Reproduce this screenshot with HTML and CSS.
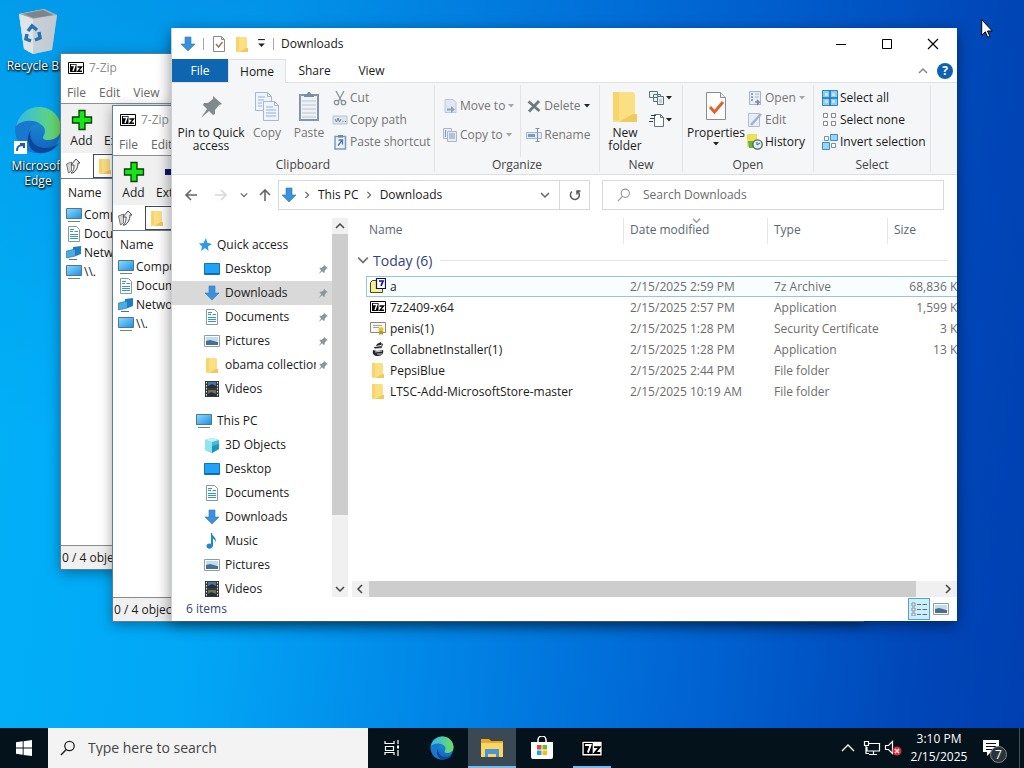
FILE: index.html
```html
<!DOCTYPE html>
<html lang="en">
<head>
    <meta charset="UTF-8">
    <meta name="viewport" content="width=device-width, initial-scale=1.0">
    <title>Desktop</title>
    <link rel="stylesheet" href="styles.css">
</head>
<body>
    <!-- Icon sprite -->
    <svg class="sprite" aria-hidden="true">
        <defs>
            <linearGradient id="edge-a" x1="0" y1="0" x2="1" y2="0"><stop offset="0" stop-color="#2fb9ee"/><stop offset="1" stop-color="#6fdc5c"/></linearGradient>
            <linearGradient id="edge-b" x1="0" y1="0" x2="0" y2="1"><stop offset="0" stop-color="#1b9de2"/><stop offset="1" stop-color="#1560bb"/></linearGradient>
            <linearGradient id="screen" x1="0" y1="0" x2="1" y2="1"><stop offset="0" stop-color="#8fdcff"/><stop offset="1" stop-color="#1b8fe0"/></linearGradient>
            <linearGradient id="bin" x1="0" y1="0" x2="1" y2="0"><stop offset="0" stop-color="#dfe5ea"/><stop offset="1" stop-color="#b3bcc6"/></linearGradient>
        </defs>
        <symbol id="i-down" viewBox="0 0 16 16"><path d="M5 1h6v7h4l-7 7-7-7h4z" fill="#3a92dc" stroke="#2a78bd" stroke-width=".6"/></symbol>
        <symbol id="i-folder" viewBox="0 0 16 16"><path d="M2 1h10l1 1v11l1 1v2H2z" fill="#fbdf83"/><path d="M2 1h3v14H2z" fill="#f7d56c"/><path d="M12 12h2v4H5z" fill="#f0ca5e"/></symbol>
        <symbol id="i-check" viewBox="0 0 16 16"><path d="M2.500 .5h8l3 3v12h-11z" fill="#fff" stroke="#8b8b8b"/><path d="M10.500.5v3h3" fill="none" stroke="#8b8b8b"/><path d="M5 8l2.500 3L11.500 6" fill="none" stroke="#a5744e" stroke-width="1.500"/></symbol>
        <symbol id="i-caret" viewBox="0 0 6 4"><path d="M0 0h6L3 3.500z" fill="currentColor"/></symbol>
        <symbol id="i-pin" viewBox="0 0 32 32"><path d="M18 6l9 8-3 1-4 5 0 4-2 1-4-4-8 7 6-9-4-4 1-2h4l5-4z" fill="currentColor"/></symbol>
        <symbol id="i-copy" viewBox="0 0 32 32"><g fill="#eef4fb" stroke="#a5b8cd"><path d="M4.500 2.500h12l4 4v14h-16zM16.500 2.500v4h4"/><path d="M12.500 11.500h11l4 4v15h-15zM23.500 11.500v4h4"/></g><path d="M7 7h7M7 10h6M7 13h4M7 16h4M15 17h7M15 20h10M15 23h10M15 26h10" stroke="#8fb3da"/></symbol>
        <symbol id="i-paste" viewBox="0 0 32 32"><path d="M7 5h18v25H7z" fill="#eef1f5" stroke="#8496ac" stroke-width="2"/><path d="M11 7V4h3l1-2h2l1 2h3v3z" fill="#7b8da2"/><path d="M9 11h14M9 15h14M9 19h14M9 23h14M9 27h14" stroke="#b9c5d3"/></symbol>
        <symbol id="i-cut" viewBox="0 0 16 16"><g fill="none" stroke="#8b9199" stroke-width="1.300"><path d="M4 1l5.500 10M12 1L6.500 11"/><circle cx="4.500" cy="12.500" r="2.200"/><circle cx="11.500" cy="12.500" r="2.200"/></g></symbol>
        <symbol id="i-path" viewBox="0 0 16 16"><path d="M1 4h14v8H1z" fill="#dde6f0" stroke="#b4c4d6"/><path d="M3 7l1.500 3L6 6l1.500 4L9 7M10.500 9.500h1M13 9.500h1" fill="none" stroke="#6e8299"/></symbol>
        <symbol id="i-shortcut" viewBox="0 0 16 16"><path d="M3 2.500h10.500v12.500H3z" fill="#edf2f8" stroke="#7d99bb" stroke-width="1.500"/><path d="M6 1h5v2.500H6z" fill="#7088a5"/><path d="M6 11.500l4-5M6.500 6H10.500v4.500" fill="none" stroke="#4677b1" stroke-width="1.300"/></symbol>
        <symbol id="i-move" viewBox="0 0 16 16"><path d="M3 1.500h8l3 3v10H3z" fill="#dfe8f2" stroke="#b9c8da"/><path d="M5 10.500h4V8l4 3.500L9 15v-2.500H5z" fill="#8ea3bd"/></symbol>
        <symbol id="i-copyto" viewBox="0 0 16 16"><g fill="#e6ecf5" stroke="#a9b8cf"><path d="M1.500 1.500h8v10h-8z"/><path d="M5.500 4.500h9v10h-9z"/></g><path d="M7 7h6M7 9h6M7 11h6M3.500 3v7" stroke="#8398b8"/></symbol>
        <symbol id="i-delete" viewBox="0 0 16 16"><path d="M2.500 3.500l11 9.500M13 3L3 13.500" stroke="#6f7a80" stroke-width="2.800"/></symbol>
        <symbol id="i-rename" viewBox="0 0 16 16"><path d="M.5 5.500h15v6H.5z" fill="#e3ebf5" stroke="#a3b4cb"/><path d="M2 7h7v3H2z" fill="#7b99c3"/><path d="M9.500 1.500h4M11.500 1.500v13M9.500 14.500h4" stroke="#7c90ab"/></symbol>
        <symbol id="i-newitem" viewBox="0 0 16 16"><g fill="#e9f2f2" stroke="#5b7478"><path d="M.5 1.500h8v6h-8zM4.500 4.500h7v7h-7z"/><path d="M8.500 6.500h6v8h-6z"/></g><path d="M10 10h3M10 12h3" stroke="#9ab0b3"/></symbol>
        <symbol id="i-access" viewBox="0 0 16 16"><path d="M5.500 2.500h6l3 3v9h-9z" fill="#fff" stroke="#62727f"/><path d="M11.500 2.500v3h3" fill="none" stroke="#62727f"/><path d="M2 3.500h5M1 6.500h5M0 9.500h4" stroke="#24435f"/></symbol>
        <symbol id="i-props" viewBox="0 0 32 32"><path d="M6.500 2.500h14l5 5v22h-19z" fill="#fff" stroke="#8c8c8c"/><path d="M20.500 2.500v5h5" fill="#e8edf0" stroke="#8c8c8c"/><path d="M10 17l4.500 5L23 12" fill="none" stroke="#e2622a" stroke-width="3"/></symbol>
        <symbol id="i-open" viewBox="0 0 16 16"><path d="M2.500 1.500h11v13h-11z" fill="#e9eef5" stroke="#a5b2c8"/><path d="M4 4h2M4 7h2M4 10h2" stroke="#7d8db0" stroke-width="1.500"/><path d="M8 4h4M8 7h4" stroke="#aab6cc"/><path d="M8 12h4l-2-2M12 12l-2 3" fill="none" stroke="#7587a8" stroke-width="1.500"/></symbol>
        <symbol id="i-edit" viewBox="0 0 16 16"><path d="M1.500 1.500h11v13h-11z" fill="#e6edf6" stroke="#b0bfd3"/><path d="M4 13L14 2" stroke="#a0b1cc" stroke-width="2.500"/></symbol>
        <symbol id="i-history" viewBox="0 0 16 16"><path d="M0 0h10v13H0z" fill="#eedf55"/><path d="M1 7h5v7H2z" fill="#63b345"/><circle cx="10.500" cy="10.500" r="4.700" fill="#dff0e8" stroke="#45645e" stroke-width="1.300"/><path d="M10 8v3l3-2" fill="none" stroke="#2c5f8d"/></symbol>
        <symbol id="i-all" viewBox="0 0 16 16"><path d="M.5.5h15v15H.5z" fill="#87cdf8" stroke="#3386c3"/><path d="M8 0v16M0 8h16" stroke="#1b74b6" stroke-width="1.500"/><path d="M3 3h3v3H3zM10 3h3v3h-3zM3 10h3v3H3zM10 10h3v3h-3z" fill="#c3e8fd"/></symbol>
        <symbol id="i-none" viewBox="0 0 16 16"><path d="M1.500 1.500h4v4h-4zM9.500 1.500h4v4h-4zM1.500 9.500h4v4h-4zM9.500 9.500h4v4h-4z" fill="#fff" stroke="#888"/></symbol>
        <symbol id="i-invert" viewBox="0 0 16 16"><path d="M2.500 2.500h4v4h-4zM9.500 9.500h4v4h-4z" fill="#fff" stroke="#6a93b4"/><path d="M8.500.5h7v6h-7zM.5 8.500h7v7h-7z" fill="#9bd4f7" stroke="#3b8fd0"/></symbol>
        <symbol id="i-star" viewBox="0 0 16 16"><path d="M10 1l1.300 4.700L16 7l-4 2.500L12.500 14 9 11l-4 3 1-4.500L3 6.500 7.500 6z" fill="#2f9be4"/></symbol>
        <symbol id="i-desktop" viewBox="0 0 16 16"><path d="M.5 2.500h15v11H.5z" fill="#1ea3f8" stroke="#1572b8"/><path d="M1 12.500h14" stroke="#0f6bb0"/></symbol>
        <symbol id="i-doc" viewBox="0 0 16 16"><path d="M2.500.5h8l3 3v12h-11z" fill="#fff" stroke="#8497a5"/><path d="M4 5.500h3M4 8.500h8M4 10.500h8M4 12.500h8M8.500 5.500h3.500M4 3.500h4" stroke="#3a98b5"/></symbol>
        <symbol id="i-pic" viewBox="0 0 16 16"><path d="M.5 2.500h15v11H.5z" fill="#fff" stroke="#929ba3"/><path d="M2 4h12v4H2z" fill="#bfdcf2"/><path d="M2 8l4-1 8 2v3H2z" fill="#47708f"/></symbol>
        <symbol id="i-video" viewBox="0 0 16 16"><path d="M1 0h14v16H1z" fill="#35393c"/><path d="M2.500 1v14M13.500 1v14" stroke="#e3e3e3" stroke-dasharray="1.500 1.500"/><path d="M4 1h8v6H4z" fill="#4b759e"/><path d="M4 9h8v6H4z" fill="#6d7448"/><path d="M4 5l4-2 4 2v2H4zM4 13l3-2 5 2v2H4z" fill="#222c3d"/></symbol>
        <symbol id="i-pc" viewBox="0 0 16 16"><path d="M.5 1.500h15v10H.5z" fill="url(#screen)" stroke="#4e7890"/><path d="M2 14.500h12" stroke="#6a8494"/></symbol>
        <symbol id="i-cube" viewBox="0 0 16 16"><path d="M1 3l7-2 7 2v9l-7 4-7-3z" fill="#3fbcd6"/><path d="M1 3l7 2v11l-7-3z" fill="#8fe4ee"/><path d="M1 3l7-2 7 2-7 2z" fill="#c2f4f8"/><path d="M8 9l7-2v5l-7 4z" fill="#1f95bb"/></symbol>
        <symbol id="i-music" viewBox="0 0 16 16"><path d="M8 0c.5 4 5 4.500 3.500 9-.5-2-1.500-3-2.500-3.200V12c0 5-7 4.500-6.500 1 .3-2.500 3-3 4.500-2V0z" fill="#2187cf"/></symbol>
        <symbol id="i-net" viewBox="0 0 16 16"><path d="M7 2l8-1v8l-5 2-3-2z" fill="#1c7fc4"/><path d="M.5 6l9-2v7l-9 2z" fill="#43aee8" stroke="#27688f" stroke-width=".6"/><path d="M3 14.500h8" stroke="#5c7180"/></symbol>
        <symbol id="i-7z" viewBox="0 0 16 12"><path d="M.5.5h15v11H.5z" fill="#fff" stroke="#000"/><path d="M2 2h6.500v8H2z" fill="#000"/><path d="M3 3.500h4L5 9" fill="none" stroke="#fff" stroke-width="1.400"/><path d="M9.500 5h4l-3.500 4.300h4" fill="none" stroke="#000" stroke-width="1.400"/></symbol>
        <symbol id="i-archive" viewBox="0 0 16 16"><path d="M.5 4.500l2-2h4v2h6v10H.5z" fill="#f8f193" stroke="#4b4a25"/><path d="M6.500.5h9v10h-9z" fill="#fff" stroke="#10106a" stroke-width="1.200"/><path d="M9 3h4l-2 5" fill="none" stroke="#10109a" stroke-width="1.700"/></symbol>
        <symbol id="i-cert" viewBox="0 0 16 16"><path d="M.5 2.500h15v10H.5z" fill="#fbf8ea" stroke="#888a87"/><path d="M3 5.500h9M3 7.500h6" stroke="#a0a3ab"/><circle cx="11" cy="9.500" r="2.500" fill="#e8c52a"/><path d="M9 11v4l2-1 2 1v-4z" fill="#b79a2b"/></symbol>
        <symbol id="i-collab" viewBox="0 0 16 16"><path d="M3 9l4 1 6-1c1 3-1 6-5 6s-6-2-5-6zM4 6l8-1v2l-7 1zM7 3l4-2v3L6 5zM11 2l2 1-1 3z" fill="#23272a"/><path d="M5 11l7-1M4 8l8-1M7 13h5" stroke="#c9cccf"/></symbol>
        <symbol id="i-plus" viewBox="0 0 22 22"><path d="M8 1.500h6V8h6.500v6H14v6.500H8V14H1.500V8H8z" fill="#16e616" stroke="#073d07" stroke-width="1.300"/></symbol>
        <symbol id="i-up" viewBox="0 0 16 16"><path d="M1.500 6l5-2v9l-3 2z" fill="#d6d6d6" stroke="#777"/><path d="M6 15c3-2 3-5 3-8H6l5-6 4 4h-2c0 5-2 8-5 10z" fill="#eee" stroke="#4a4a4a"/></symbol>
        <symbol id="i-chev" viewBox="0 0 10 10"><path d="M1 3l4 4 4-4" fill="none" stroke="currentColor" stroke-width="1.500"/></symbol>
        <symbol id="i-arrow" viewBox="0 0 14 14"><path d="M13 7H2M7 2L2 7l5 5" fill="none" stroke="currentColor" stroke-width="1.600"/></symbol>
        <symbol id="i-glass" viewBox="0 0 16 16"><circle cx="9.500" cy="6" r="4.700" fill="none" stroke="currentColor" stroke-width="1.300"/><path d="M6.200 9.500L1 15" stroke="currentColor" stroke-width="1.400"/></symbol>
        <symbol id="i-edge" viewBox="0 0 48 48"><circle cx="24" cy="24" r="23" fill="url(#edge-b)"/><path d="M2 20C5 8 14 1 25 1c13 0 22 10 22 21 0 8-6 12-13 12-5 0-6-2-4-5 3-6-1-12-9-12-8 0-15 4-19 9z" fill="url(#edge-a)"/><path d="M2 20c7-7 19-6 24-2-9-1-13 6-12 13 1 7 7 12 14 15C12 49 0 36 2 20z" fill="#1877cf"/><path d="M17 24c-3 9 4 18 14 18 6 0 10-2 14-5-5 8-13 11-21 10-10-3-13-16-7-23z" fill="#0e4799"/></symbol>
    </svg>

    <main class="desktop">
        <div class="desktop-icons">
            <a href="#" class="shortcut">
                <svg viewBox="0 0 48 48"><path d="M5 8l25-5 13 6-5 35-19 4-9-5z" fill="url(#bin)"/><path d="M5 8l25-5 13 6-24 4z" fill="#a3abb2"/><path d="M9 8l20-4 10 5-19 3z" fill="#7d858b"/><path d="M5 8l14 5v35l-9-5z" fill="#dfe4e8"/><path d="M19 13l24-4-5 35-19 4z" fill="#c6ced6" opacity=".7"/><g fill="none" stroke="#2472b8" stroke-width="3.500"><path d="M14 25l4-5 5 4"/><path d="M25 26l1 6-5 2"/><path d="M17 35l-5-2 1-5"/></g></svg>
                <span>Recycle Bin</span>
            </a>
            <a href="#" class="shortcut">
                <svg viewBox="0 0 48 48"><use href="#i-edge"/><path d="M0 35h13v13H0z" fill="#fff"/><path d="M3 45c0-5 2-6 6-6M6 38h4v4" fill="none" stroke="#1c5fae" stroke-width="2"/></svg>
                <span>Microsoft Edge</span>
            </a>
        </div>

        <section class="zip zip-back">
            <div class="zip-title"><svg class="zlogo"><use href="#i-7z"/></svg>7-Zip</div>
            <nav class="zip-menu"><button>File</button><button>Edit</button><button>View</button></nav>
            <div class="zip-tools">
                <button><svg><use href="#i-plus"/></svg>Add</button>
                <button><svg viewBox="0 0 22 22"><path d="M1 8h20v6H1z" fill="#11116e"/></svg>Extract</button>
            </div>
            <div class="zip-path"><svg class="ico"><use href="#i-up"/></svg><div class="zip-combo"><svg class="ico"><use href="#i-folder"/></svg></div></div>
            <div class="zip-list">
                <p>Name</p>
                <ul>
                    <li><svg class="ico"><use href="#i-pc"/></svg>Computer</li>
                    <li><svg class="ico"><use href="#i-doc"/></svg>Documents</li>
                    <li><svg class="ico"><use href="#i-net"/></svg>Network</li>
                    <li><svg class="ico"><use href="#i-pc"/></svg>\\.</li>
                </ul>
            </div>
            <div class="zip-status">0 / 4 object(s) selected</div>
        </section>

        <section class="zip zip-front">
            <div class="zip-title"><svg class="zlogo"><use href="#i-7z"/></svg>7-Zip</div>
            <nav class="zip-menu"><button>File</button><button>Edit</button><button>View</button></nav>
            <div class="zip-tools">
                <button><svg><use href="#i-plus"/></svg>Add</button>
                <button><svg viewBox="0 0 22 22"><path d="M1 8h20v6H1z" fill="#11116e"/></svg>Extract</button>
            </div>
            <div class="zip-path"><svg class="ico"><use href="#i-up"/></svg><div class="zip-combo"><svg class="ico"><use href="#i-folder"/></svg></div></div>
            <div class="zip-list">
                <p>Name</p>
                <ul>
                    <li><svg class="ico"><use href="#i-pc"/></svg>Computer</li>
                    <li><svg class="ico"><use href="#i-doc"/></svg>Documents</li>
                    <li><svg class="ico"><use href="#i-net"/></svg>Network</li>
                    <li><svg class="ico"><use href="#i-pc"/></svg>\\.</li>
                </ul>
            </div>
            <div class="zip-status">0 / 4 object(s) selected</div>
        </section>

        <section class="explorer">
            <header class="titlebar">
                <svg class="ico"><use href="#i-down"/></svg>
                <i class="bar"></i>
                <button aria-label="Properties"><svg class="ico"><use href="#i-check"/></svg></button>
                <button aria-label="New folder"><svg class="ico"><use href="#i-folder"/></svg></button>
                <button aria-label="Customize"><svg class="customize" viewBox="0 0 8 8"><path d="M1 .5h6" stroke="#222"/><path d="M1 4h6L4 7z" fill="#222"/></svg></button>
                <i class="bar"></i>
                <h1>Downloads</h1>
                <div class="controls">
                    <button aria-label="Minimize"><svg viewBox="0 0 12 12"><path d="M1 6.500h10" stroke="#000"/></svg></button>
                    <button aria-label="Maximize"><svg viewBox="0 0 12 12"><path d="M1.500 1.500h9v9h-9z" fill="none" stroke="#000"/></svg></button>
                    <button aria-label="Close"><svg viewBox="0 0 12 12"><path d="M1 1l10 10M11 1L1 11" stroke="#000" stroke-width="1.200"/></svg></button>
                </div>
            </header>

            <nav class="tabs">
                <button class="tab file">File</button>
                <button class="tab active">Home</button>
                <button class="tab">Share</button>
                <button class="tab">View</button>
                <button class="collapse" aria-label="Collapse ribbon"><svg class="flip"><use href="#i-chev"/></svg></button>
                <button class="help" aria-label="Help">?</button>
            </nav>

            <div class="ribbon">
                <div class="group clipboard">
                    <div class="group-body">
                        <button class="big pin-btn"><svg class="grey"><use href="#i-pin"/></svg>Pin to Quick access</button>
                        <button class="big off"><svg><use href="#i-copy"/></svg>Copy</button>
                        <button class="big off"><svg><use href="#i-paste"/></svg>Paste</button>
                        <div class="stack">
                            <button class="off"><svg class="ico"><use href="#i-cut"/></svg>Cut</button>
                            <button class="off"><svg class="ico"><use href="#i-path"/></svg>Copy path</button>
                            <button class="off"><svg class="ico"><use href="#i-shortcut"/></svg>Paste shortcut</button>
                        </div>
                    </div>
                    <div class="group-name">Clipboard</div>
                </div>
                <div class="group organize">
                    <div class="group-body">
                        <div class="stack loose">
                            <button class="off"><svg class="ico"><use href="#i-move"/></svg>Move to<svg class="caret pale"><use href="#i-caret"/></svg></button>
                            <button class="off"><svg class="ico"><use href="#i-copyto"/></svg>Copy to<svg class="caret pale"><use href="#i-caret"/></svg></button>
                        </div>
                        <div class="stack loose ruled">
                            <button class="off"><svg class="ico"><use href="#i-delete"/></svg>Delete<svg class="caret dark"><use href="#i-caret"/></svg></button>
                            <button class="off"><svg class="ico"><use href="#i-rename"/></svg>Rename</button>
                        </div>
                    </div>
                    <div class="group-name">Organize</div>
                </div>
                <div class="group new">
                    <div class="group-body">
                        <button class="big"><svg><use href="#i-folder"/></svg>New folder</button>
                        <div class="stack">
                            <button aria-label="New item"><svg class="ico"><use href="#i-newitem"/></svg><svg class="caret dark"><use href="#i-caret"/></svg></button>
                            <button aria-label="Easy access"><svg class="ico"><use href="#i-access"/></svg><svg class="caret dark"><use href="#i-caret"/></svg></button>
                        </div>
                    </div>
                    <div class="group-name">New</div>
                </div>
                <div class="group open">
                    <div class="group-body">
                        <button class="big"><svg><use href="#i-props"/></svg>Properties<svg class="caret dark"><use href="#i-caret"/></svg></button>
                        <div class="stack">
                            <button class="off"><svg class="ico"><use href="#i-open"/></svg>Open<svg class="caret pale"><use href="#i-caret"/></svg></button>
                            <button class="off"><svg class="ico"><use href="#i-edit"/></svg>Edit</button>
                            <button><svg class="ico"><use href="#i-history"/></svg>History</button>
                        </div>
                    </div>
                    <div class="group-name">Open</div>
                </div>
                <div class="group select">
                    <div class="group-body">
                        <div class="stack">
                            <button><svg class="ico"><use href="#i-all"/></svg>Select all</button>
                            <button><svg class="ico"><use href="#i-none"/></svg>Select none</button>
                            <button><svg class="ico"><use href="#i-invert"/></svg>Invert selection</button>
                        </div>
                    </div>
                    <div class="group-name">Select</div>
                </div>
            </div>

            <div class="navbar">
                <button class="nav-btn" aria-label="Back"><svg class="arrow"><use href="#i-arrow"/></svg></button>
                <button class="nav-btn forward" aria-label="Forward"><svg class="arrow"><use href="#i-arrow"/></svg></button>
                <button class="recent" aria-label="Recent locations"><svg><use href="#i-chev"/></svg></button>
                <button class="up" aria-label="Up"><svg class="arrow"><use href="#i-arrow"/></svg></button>
                <div class="address">
                    <svg class="ico"><use href="#i-down"/></svg>
                    <svg class="crumb"><use href="#i-chev"/></svg>
                    <button>This PC</button>
                    <svg class="crumb"><use href="#i-chev"/></svg>
                    <button>Downloads</button>
                    <button class="history" aria-label="Previous locations"><svg class="small"><use href="#i-chev"/></svg></button>
                    <button class="refresh" aria-label="Refresh"><svg viewBox="0 0 12 12"><path d="M3 2.500A4.500 4.500 0 1 0 8 2M8 5.500V2h3.500" fill="none" stroke="#555" stroke-width="1.500"/></svg></button>
                </div>
                <label class="search"><svg><use href="#i-glass"/></svg><input type="text" placeholder="Search Downloads" aria-label="Search Downloads"></label>
            </div>

            <div class="content">
                <aside class="sidebar">
                    <ul class="tree">
                        <li class="root"><svg class="ico"><use href="#i-star"/></svg><span>Quick access</span></li>
                        <li><svg class="ico"><use href="#i-desktop"/></svg><span>Desktop</span><svg class="pin"><use href="#i-pin"/></svg></li>
                        <li class="current"><svg class="ico"><use href="#i-down"/></svg><span>Downloads</span><svg class="pin"><use href="#i-pin"/></svg></li>
                        <li><svg class="ico"><use href="#i-doc"/></svg><span>Documents</span><svg class="pin"><use href="#i-pin"/></svg></li>
                        <li><svg class="ico"><use href="#i-pic"/></svg><span>Pictures</span><svg class="pin"><use href="#i-pin"/></svg></li>
                        <li><svg class="ico"><use href="#i-folder"/></svg><span>obama collection</span><svg class="pin"><use href="#i-pin"/></svg></li>
                        <li><svg class="ico"><use href="#i-video"/></svg><span>Videos</span></li>
                    </ul>
                    <ul class="tree">
                        <li class="root"><svg class="ico"><use href="#i-pc"/></svg><span>This PC</span></li>
                        <li><svg class="ico"><use href="#i-cube"/></svg><span>3D Objects</span></li>
                        <li><svg class="ico"><use href="#i-desktop"/></svg><span>Desktop</span></li>
                        <li><svg class="ico"><use href="#i-doc"/></svg><span>Documents</span></li>
                        <li><svg class="ico"><use href="#i-down"/></svg><span>Downloads</span></li>
                        <li><svg class="ico"><use href="#i-music"/></svg><span>Music</span></li>
                        <li><svg class="ico"><use href="#i-pic"/></svg><span>Pictures</span></li>
                        <li><svg class="ico"><use href="#i-video"/></svg><span>Videos</span></li>
                    </ul>
                </aside>
                <div class="vscroll">
                    <svg class="flip"><use href="#i-chev"/></svg>
                    <div class="track"><div class="thumb"></div></div>
                    <svg><use href="#i-chev"/></svg>
                </div>
                <div class="files">
                    <div class="file-view">
                        <table>
                            <thead>
                                <tr><th class="name">Name</th><th class="date">Date modified<svg class="sort"><use href="#i-chev"/></svg></th><th class="type">Type</th><th class="size">Size</th></tr>
                            </thead>
                            <tbody>
                                <tr class="today"><td colspan="4"><button><svg><use href="#i-chev"/></svg>Today (6)</button></td></tr>
                                <tr class="focus"><td><svg class="ico"><use href="#i-archive"/></svg>a</td><td>2/15/2025 2:59 PM</td><td>7z Archive</td><td>68,836 KB</td></tr>
                                <tr><td><svg class="ico"><use href="#i-7z"/></svg>7z2409-x64</td><td>2/15/2025 2:57 PM</td><td>Application</td><td>1,599 KB</td></tr>
                                <tr><td><svg class="ico"><use href="#i-cert"/></svg>penis(1)</td><td>2/15/2025 1:28 PM</td><td>Security Certificate</td><td>3 KB</td></tr>
                                <tr><td><svg class="ico"><use href="#i-collab"/></svg>CollabnetInstaller(1)</td><td>2/15/2025 1:28 PM</td><td>Application</td><td>13 KB</td></tr>
                                <tr><td><svg class="ico"><use href="#i-folder"/></svg>PepsiBlue</td><td>2/15/2025 2:44 PM</td><td>File folder</td><td></td></tr>
                                <tr><td><svg class="ico"><use href="#i-folder"/></svg>LTSC-Add-MicrosoftStore-master</td><td>2/15/2025 10:19 AM</td><td>File folder</td><td></td></tr>
                            </tbody>
                        </table>
                    </div>
                    <div class="hscroll">
                        <svg class="left"><use href="#i-chev"/></svg>
                        <div class="track"><div class="thumb"></div></div>
                        <svg class="right"><use href="#i-chev"/></svg>
                    </div>
                </div>
            </div>

            <footer class="statusbar">
                <span>6 items</span>
                <button class="view on" aria-label="Details view"><svg viewBox="0 0 16 14"><path d="M1 1h3v3H1zM1 6h3v3H1zM1 11h3v3H1z" fill="#fff" stroke="#7b87a0"/><path d="M6 2.500h4M6 7.500h4M6 12.500h4M11.500 2.500H16M11.500 7.500H16M11.500 12.500H16" stroke="#5b6b80"/></svg></button>
                <button class="view" aria-label="Large icons view"><svg class="ico"><use href="#i-pic"/></svg></button>
            </footer>
        </section>

        <svg class="cursor" viewBox="0 0 12 19"><path d="M.7.7v15.500l3.600-3.400 2.400 5.500 2.200-1-2.400-5.300h4.800z" fill="#fff" stroke="#000"/></svg>
    </main>

    <footer class="taskbar">
        <button class="start" aria-label="Start"><svg viewBox="0 0 16 16"><path d="M0 2.300l6.700-1v6.300H0zM7.600 1.200L16 0v7.600H7.600zM0 8.400h6.700v6.400L0 13.800zM7.600 8.400H16V16l-8.400-1.100z" fill="#fff"/></svg></button>
        <label class="task-search"><svg><use href="#i-glass"/></svg><input type="text" placeholder="Type here to search" aria-label="Type here to search"></label>
        <nav class="apps">
            <button aria-label="Task view"><svg class="taskview" viewBox="0 0 16 16"><path d="M1 1v2.500h9V1M1 15v-2.500h9V15M1.500 6.500h8v4h-8zM14 0v4M14 10v6" fill="none" stroke="#fff" stroke-width="1.200"/><path d="M13 5.500h2v3h-2z" fill="#fff"/></svg></button>
            <button aria-label="Edge"><svg><use href="#i-edge"/></svg></button>
            <button class="running" aria-label="File Explorer"><svg viewBox="0 0 24 24"><path d="M1 3h8l2 2h12v15H1z" fill="#e9a825"/><path d="M1 7h22v14H1z" fill="#fdd662"/><path d="M5 13h14v8h-3v-3H8v3H5z" fill="#4b95d6"/></svg></button>
            <button aria-label="Store"><svg viewBox="0 0 24 24"><path d="M8 6V4a4 4 0 0 1 8 0v2" fill="none" stroke="#fff" stroke-width="1.500"/><path d="M1 6h22v15a2 2 0 0 1-2 2H3a2 2 0 0 1-2-2z" fill="#fff"/><path d="M7 9h4.500v4.500H7z" fill="#e2492f"/><path d="M12.500 9H17v4.500h-4.500z" fill="#76b82a"/><path d="M7 14.500h4.500V19H7z" fill="#2aa0e4"/><path d="M12.500 14.500H17V19h-4.500z" fill="#f9b917"/></svg></button>
            <button class="idle" aria-label="7-Zip"><svg class="seven"><use href="#i-7z"/></svg></button>
        </nav>
        <div class="tray">
            <button class="more" aria-label="Show hidden icons"><svg viewBox="0 0 14 14"><path d="M1 10l6-6 6 6" fill="none" stroke="#fff" stroke-width="1.300"/></svg></button>
            <button aria-label="Network"><svg class="wide" viewBox="0 0 18 16"><path d="M6 3.500h10.500v7.500H4V7M10.500 11v3M6 14.500h8M1.500 1.500h4v4h-4zM3 6v7.500h3" fill="none" stroke="#fff" stroke-width="1.200"/></svg></button>
            <button aria-label="Volume"><svg class="wide" viewBox="0 0 18 16"><path d="M1.500 5.500h3l4-4v12l-4-4h-3z" fill="none" stroke="#fff" stroke-width="1.200"/><circle cx="13" cy="11" r="4.500" fill="#dd2b38"/><path d="M11 9l4 4M15 9l-4 4" stroke="#fff" stroke-width="1.300"/></svg></button>
            <div class="clock"><span>3:10 PM</span><span>2/15/2025</span></div>
            <button class="notes" aria-label="Notifications"><svg viewBox="0 0 18 18"><path d="M1 1h16v12h-8l-4 4v-4H1z" fill="#fff"/><path d="M4 4.500h10M4 7.500h10M4 10.500h6" stroke="#07121c"/></svg><span class="badge">7</span></button>
        </div>
    </footer>
</body>
</html>
```
FILE: styles.css
```css
* {
    box-sizing: border-box;
}
body {
    margin: 0;
    height: 100vh;
    display: flex;
    flex-direction: column;
    overflow: hidden;
    font-family: "Open Sans", "Noto Sans", sans-serif;
    font-size: 12px;
    line-height: 16px;
    color: #1a1a1a;
}
button {
    font: inherit;
    color: inherit;
    background: none;
    border: none;
    padding: 0;
    display: flex;
    align-items: center;
    white-space: nowrap;
}
input {
    font: inherit;
    border: none;
    background: none;
    outline: none;
    padding: 0;
    flex: 1;
    min-width: 0;
}
ul, p, h1 {
    margin: 0;
    padding: 0;
    list-style: none;
    font-size: 12px;
    font-weight: normal;
}
svg {
    flex: none;
    display: block;
    width: 10px;
    height: 10px;
}
.sprite {
    position: absolute;
    width: 0;
    height: 0;
}
.ico {
    width: 16px;
    height: 16px;
}
.flip {
    transform: rotate(180deg);
}

/* Desktop */
.desktop {
    flex: 1;
    position: relative;
    overflow: hidden;
    background: linear-gradient(180deg, rgba(0, 70, 180, 0.2), rgba(0, 70, 180, 0) 60%),
        linear-gradient(97deg, #02b2f8 0%, #02a6f6 25%, #0180e4 50%, #0060cf 72%, #0046b8 90%, #003fb2 100%);
}
.desktop-icons {
    width: 76px;
    padding-top: 6px;
    display: flex;
    flex-direction: column;
}
.shortcut {
    height: 100px;
    display: flex;
    flex-direction: column;
    align-items: center;
    color: #fff;
    text-align: center;
    line-height: 15px;
    text-decoration: none;
    text-shadow: 0 1px 2px #000, 1px 1px 2px #000;
}
.shortcut svg {
    width: 48px;
    height: 48px;
    margin-bottom: 4px;
}

/* 7-Zip windows */
.zip {
    position: absolute;
    width: 752px;
    height: 517px;
    display: flex;
    flex-direction: column;
    background: #fff;
    border: 1px solid #5c7f96;
    box-shadow: 0 3px 12px rgba(0, 0, 0, 0.35);
}
.zip-back {
    left: 60px;
    top: 53px;
}
.zip-front {
    left: 112px;
    top: 105px;
}
.zip-title {
    height: 28px;
    display: flex;
    align-items: center;
    gap: 5px;
    padding-left: 7px;
    color: #8c8c8c;
}
.zlogo {
    width: 16px;
    height: 12px;
}
.zip-menu {
    height: 21px;
    display: flex;
    align-items: center;
    gap: 13px;
    padding-left: 6px;
    color: #666;
}
.zip-tools {
    height: 50px;
    display: flex;
    gap: 10px;
    padding: 5px 8px;
    border-top: 1px solid #8f8f8f;
    background: #f0f0f0;
}
.zip-tools button {
    flex-direction: column;
    min-width: 25px;
    gap: 2px;
}
.zip-tools svg {
    width: 22px;
    height: 22px;
}
.zip-path {
    height: 25px;
    display: flex;
    align-items: center;
    gap: 12px;
    padding-left: 4px;
}
.zip-combo {
    flex: 1;
    height: 24px;
    padding: 3px;
    border: 1px solid #45484e;
}
.zip-list {
    flex: 1;
    border-top: 1px solid #6b7f8c;
    border-bottom: 1px solid #8a8a8a;
    padding-top: 6px;
}
.zip-list p {
    padding-left: 7px;
    height: 20px;
}
.zip-list li {
    display: flex;
    align-items: center;
    gap: 2px;
    height: 19px;
    padding-left: 5px;
}
.zip-status {
    height: 23px;
    line-height: 24px;
    padding-left: 1px;
    background: #f0f0f0;
}

/* Explorer window */
.explorer {
    position: absolute;
    left: 171px;
    right: 67px;
    top: 28px;
    bottom: 107px;
    display: flex;
    flex-direction: column;
    background: #fff;
    border-left: 1px solid #c8d0d6;
    box-shadow: 0 4px 14px rgba(0, 0, 0, 0.45);
}
.titlebar {
    height: 31px;
    flex: none;
    display: flex;
    align-items: center;
    gap: 7px;
    padding-left: 8px;
}
.titlebar .bar {
    width: 1px;
    height: 12px;
    background: #a9a9a9;
}
.titlebar .customize {
    width: 9px;
    height: 9px;
}
.controls {
    display: flex;
    margin-left: auto;
    margin-right: 1px;
}
.controls button {
    width: 46px;
    height: 30px;
    justify-content: center;
}
.controls svg {
    width: 12px;
    height: 12px;
}
.tabs {
    height: 24px;
    flex: none;
    display: flex;
    align-items: stretch;
    border-bottom: 1px solid #dfe1e3;
    padding-right: 4px;
}
.tab {
    width: 57px;
    justify-content: center;
}
.tab.file {
    width: 56px;
    background: #0f66b0;
    color: #fff;
}
.tab.active {
    width: 58px;
    margin-bottom: -1px;
    background: #f5f6f7;
    border: 1px solid #dfe1e3;
    border-bottom: none;
}
.tabs .collapse {
    margin-left: auto;
    margin-right: 9px;
    color: #888;
}
.tabs .help {
    align-self: center;
    justify-content: center;
    width: 16px;
    height: 16px;
    border-radius: 50%;
    background: #0b62b5;
    color: #fff;
    font-weight: bold;
}
.ribbon {
    height: 92px;
    flex: none;
    display: flex;
    background: #f5f6f7;
    border-bottom: 1px solid #dcdee0;
}
.group {
    flex: none;
    margin: 2px 0;
    display: flex;
    flex-direction: column;
    border-right: 1px solid #e2e3e5;
}
.clipboard { width: 263px; }
.organize { width: 165px; }
.new { width: 83px; }
.open { width: 131px; }
.select { width: 117px; }
.group-body {
    flex: 1;
    display: flex;
    padding-left: 4px;
}
.group-name {
    height: 15px;
    text-align: center;
    color: #444;
}
.big {
    flex-direction: column;
    width: 42px;
    padding-top: 5px;
    line-height: 13px;
    white-space: normal;
}
.big svg {
    width: 32px;
    height: 32px;
    margin-bottom: 4px;
}
.big .caret {
    margin: 3px 0 0;
}
.pin-btn {
    width: 70px;
}
.grey {
    color: #81898c;
}
.off {
    color: #757575;
}
.stack {
    padding: 2px 0 0 2px;
    display: flex;
    flex-direction: column;
}
.stack button {
    height: 22px;
    gap: 2px;
}
.loose {
    padding: 6px 0 0 3px;
}
.loose button {
    height: 29px;
}
.ruled {
    margin-left: 6px;
    padding-left: 5px;
    border-left: 1px solid #e2e3e5;
}
.caret,
.big .caret {
    width: 6px;
    height: 4px;
}
.stack .caret {
    margin-left: 1px;
}
.pale {
    color: #a5a5a5;
}
.dark {
    color: #222;
}
.new .stack {
    padding-left: 3px;
}
.new .stack button {
    gap: 0;
}
.open .big {
    width: 58px;
}
.select .group-body {
    padding-left: 6px;
}

/* Address bar */
.navbar {
    height: 40px;
    flex: none;
    display: flex;
    align-items: center;
    padding: 0 13px 0 12px;
    color: #666;
}
.arrow {
    width: 14px;
    height: 14px;
}
.nav-btn {
    width: 30px;
}
.forward {
    width: 26px;
    color: #d8d8d8;
}
.forward .arrow {
    transform: rotate(180deg);
}
.recent svg {
    width: 8px;
    height: 8px;
}
.up {
    width: 30px;
    padding-left: 4px;
    justify-content: center;
}
.up .arrow {
    transform: rotate(90deg);
}
.address {
    flex: 1;
    height: 30px;
    display: flex;
    align-items: center;
    border: 1px solid #d9d9d9;
    padding-left: 2px;
    color: #1a1a1a;
}
.crumb {
    width: 8px;
    height: 8px;
    margin: 0 7px 0 6px;
    color: #666;
    transform: rotate(-90deg);
}
.history {
    margin-left: auto;
    width: 29px;
    justify-content: center;
    color: #666;
}
.refresh {
    width: 30px;
    height: 28px;
    justify-content: center;
    border-left: 1px solid #d9d9d9;
}
.refresh svg {
    width: 12px;
    height: 12px;
}
.search {
    width: 342px;
    height: 30px;
    margin-left: 12px;
    display: flex;
    align-items: center;
    gap: 12px;
    padding-left: 14px;
    border: 1px solid #d9d9d9;
}
.search svg {
    width: 14px;
    height: 14px;
    color: #999;
}
.search input::placeholder {
    color: #6d6d6d;
    opacity: 1;
}

/* Navigation tree and file list */
.content {
    flex: 1;
    min-height: 0;
    display: flex;
    padding-top: 3px;
}
.sidebar {
    width: 160px;
    padding-top: 15px;
    overflow: hidden;
}
.tree {
    margin-bottom: 8px;
}
.tree li {
    display: flex;
    align-items: center;
    gap: 5px;
    height: 24px;
    padding: 0 2px 0 32px;
}
.tree .root {
    padding-left: 24px;
}
.tree span {
    flex: 1;
    white-space: nowrap;
    overflow: hidden;
}
.tree .current {
    background: #d9d9d9;
}
.tree .pin {
    width: 14px;
    height: 14px;
    color: #8c959b;
    margin-left: -5px;
}
.vscroll {
    width: 16px;
    display: flex;
    flex-direction: column;
    align-items: center;
    padding: 3px 0;
    gap: 3px;
    background: #f0f0f0;
    color: #444;
}
.vscroll .track {
    flex: 1;
    width: 100%;
}
.vscroll .thumb {
    height: 81%;
    background: #cdcdcd;
}
.files {
    flex: 1;
    min-width: 0;
    margin-left: 4px;
    display: flex;
    flex-direction: column;
}
.file-view {
    flex: 1;
    overflow: hidden;
    padding-left: 14px;
}
table {
    width: 599px;
    table-layout: fixed;
    border-collapse: separate;
    border-spacing: 0;
}
th {
    height: 26px;
    padding: 0 0 2px 6px;
    text-align: left;
    font-weight: normal;
    color: #5b6672;
    border-left: 1px solid #e5e5e5;
    position: relative;
}
th.name {
    width: 257px;
    padding-left: 3px;
    border-left: none;
}
.date { width: 144px; }
.type { width: 120px; }
.sort {
    position: absolute;
    top: -2px;
    left: 68px;
    width: 9px;
    height: 9px;
    color: #999;
}
td {
    height: 21px;
    padding: 0 0 0 7px;
    line-height: 19px;
    color: #6d6d6d;
    white-space: nowrap;
    border: 0 solid #9fc4cf;
}
td:first-child {
    color: #1a1a1a;
    padding-left: 4px;
}
td:last-child {
    text-align: right;
}
td .ico {
    display: inline-block;
    vertical-align: middle;
    margin: -3px 4px 0 0;
}
.today td:first-child {
    height: 32px;
    padding: 0 17px 0 0;
    text-align: left;
}
.today button {
    width: 100%;
    margin-left: -9px;
    height: 32px;
    gap: 4px;
    font-size: 14px;
    color: #35427a;
}
.today svg {
    width: 12px;
    height: 12px;
    color: #777;
}
.today button::after {
    content: "";
    flex: 1;
    height: 1px;
    margin: 0 -9px 0 4px;
    background: #e3e5ea;
}
.focus td {
    border-width: 1px 0;
    background: #f8feff;
}
.focus td:first-child {
    border-left-width: 1px;
    padding-left: 3px;
}
.hscroll {
    height: 16px;
    display: flex;
    align-items: center;
    gap: 4px;
    padding: 0 4px 0 3px;
    background: #f0f0f0;
    color: #444;
}
.hscroll .track {
    flex: 1;
    height: 100%;
}
.hscroll .thumb {
    width: 96%;
    height: 100%;
    background: #cdcdcd;
}
.left {
    transform: rotate(90deg);
}
.right {
    transform: rotate(-90deg);
}
.statusbar {
    height: 24px;
    flex: none;
    display: flex;
    align-items: center;
    padding: 0 5px 0 14px;
    color: #35427a;
}
.statusbar span {
    flex: 1;
}
.view {
    width: 22px;
    height: 22px;
    justify-content: center;
}
.view.on {
    background: #cdeefb;
    border: 1px solid #4fa3cf;
}
.view.on svg {
    width: 16px;
    height: 14px;
}
.cursor {
    position: absolute;
    left: 981px;
    top: 19px;
    width: 12px;
    height: 19px;
}

/* Taskbar */
.taskbar {
    height: 40px;
    flex: none;
    display: flex;
    background: #04121c;
    color: #fff;
}
.start {
    width: 48px;
    justify-content: center;
}
.start svg {
    width: 16px;
    height: 16px;
}
.task-search {
    width: 320px;
    display: flex;
    align-items: center;
    gap: 12px;
    padding-left: 12px;
    background: #f3f3f3;
    color: #222;
    font-size: 14px;
}
.task-search svg {
    width: 16px;
    height: 16px;
}
.task-search input::placeholder {
    color: #444;
    opacity: 1;
}
.apps {
    display: flex;
    gap: 2px;
}
.apps button {
    width: 48px;
    justify-content: center;
    border-bottom: 2px solid transparent;
    border-top: 2px solid transparent;
}
.apps svg {
    width: 24px;
    height: 24px;
}
.apps .taskview {
    width: 16px;
    height: 16px;
}
.apps .seven {
    width: 22px;
    height: 17px;
}
.apps .running {
    background: #3a4954;
    border-bottom-color: #76b9ed;
}
.apps .idle {
    background: linear-gradient(#76b9ed, #76b9ed) center bottom / 38px 2px no-repeat border-box;
}
.tray {
    margin-left: auto;
    display: flex;
    align-items: center;
    gap: 3px;
}
.tray svg {
    width: 14px;
    height: 14px;
}
.tray .more {
    margin-right: 5px;
}
.tray .wide {
    width: 18px;
    height: 16px;
}
.clock {
    width: 60px;
    margin-left: 4px;
    display: flex;
    flex-direction: column;
    align-items: center;
    line-height: 18px;
}
.notes {
    width: 48px;
    height: 40px;
    position: relative;
    justify-content: center;
    padding-right: 10px;
    border-right: 1px solid #45525c;
    margin-right: 4px;
}
.tray .notes svg {
    width: 18px;
    height: 18px;
}
.badge {
    position: absolute;
    left: 18px;
    top: 18px;
    width: 17px;
    height: 17px;
    border-radius: 50%;
    border: 1px solid #7e868d;
    background: #2b333a;
    text-align: center;
    line-height: 15px;
}
```
